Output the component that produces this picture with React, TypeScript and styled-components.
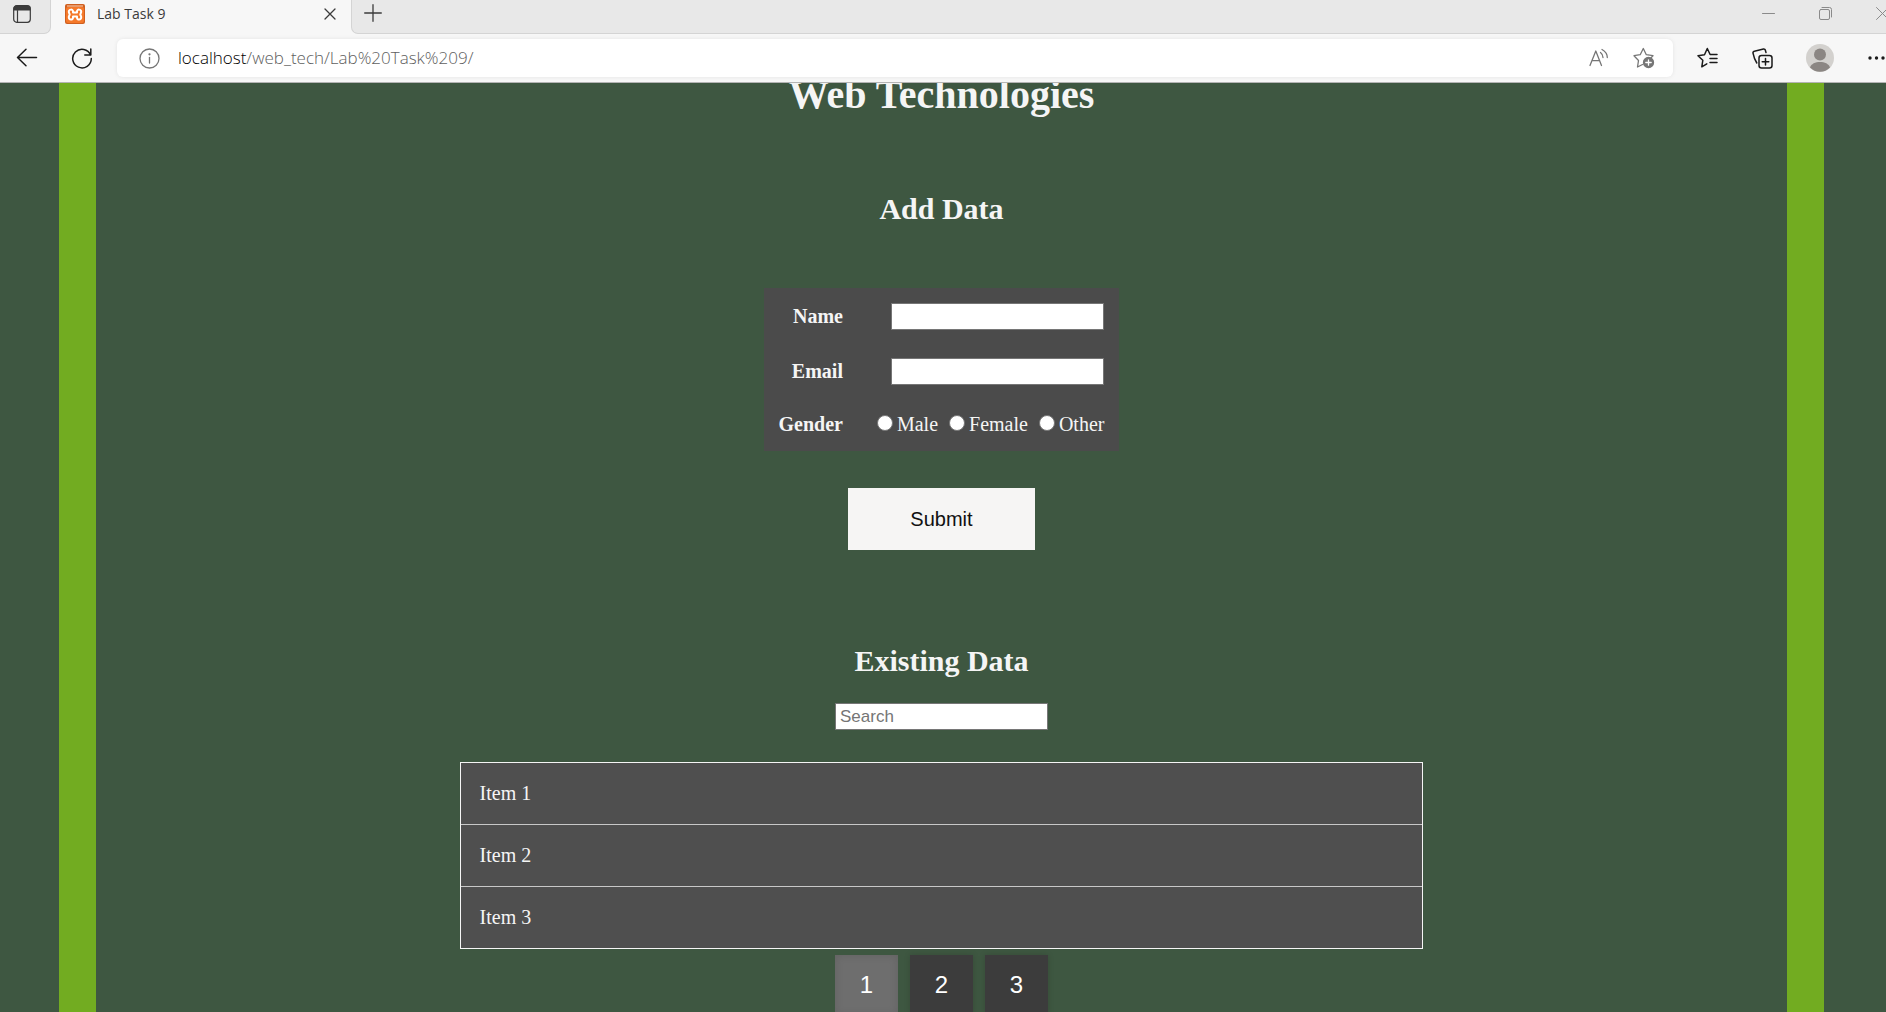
import React, { useState } from "react";
import styled, { createGlobalStyle } from "styled-components";

const GlobalStyle = createGlobalStyle`
  * { box-sizing: border-box; }
  body { margin: 0; background: #3e5741; }
  h1, h2, ul { margin: 0; padding: 0; }
  svg { display: block; flex: none; }
`;

const ui = `"Open Sans", "Noto Sans", sans-serif`;
const serif = `"Liberation Serif", "Times New Roman", serif`;
const sans = `"Liberation Sans", Arial, sans-serif`;

const Window = styled.div`
  display: flex;
  flex-direction: column;
  height: 100vh;
  overflow: hidden;
`;

/* ---------- browser chrome ---------- */

const TabStrip = styled.header`
  display: flex;
  flex: none;
  height: 34px;
  background: #f7f7f7;
  overflow: hidden;
`;

const PlainButton = styled.button`
  display: flex;
  align-items: center;
  justify-content: center;
  flex: none;
  padding: 0;
  border: 0;
  background: none;
  color: inherit;
`;

const StripStart = styled.div`
  display: flex;
  align-items: center;
  width: 51px;
  padding: 0 0 6px 13px;
  background: #e8e8e8;
  border: solid #d4d4d4;
  border-width: 0 1px 1px 0;
  border-bottom-right-radius: 7px;
  color: #3b3b3b;
`;

const Tab = styled.div`
  display: flex;
  align-items: center;
  width: 300px;
  padding: 0 15px 6px 14px;
  gap: 12px;
  color: #3b3b3b;
`;

const TabTitle = styled.span`
  flex: 1;
  font: 14px/20px ${ui};
`;

const StripEnd = styled.div`
  display: flex;
  align-items: center;
  justify-content: space-between;
  flex: 1;
  padding: 0 0 7px 12px;
  background: #e8e8e8;
  border: solid #d4d4d4;
  border-width: 0 0 1px 1px;
  border-bottom-left-radius: 7px;
  color: #3b3b3b;
`;

const WindowControls = styled.div`
  display: flex;
  gap: 44px;
  margin-right: -3px;
  color: #8a8a8a;
`;

const Toolbar = styled.nav`
  display: flex;
  align-items: center;
  flex: none;
  height: 49px;
  padding: 0 0 0 16px;
  background: #f7f7f7;
  border-bottom: 1px solid #b4b4b4;
  color: #1b1b1b;
`;

const NavButtons = styled.div`
  display: flex;
  gap: 33px;
  margin-right: 24px;
`;

const AddressBar = styled.div`
  display: flex;
  align-items: center;
  flex: 1;
  height: 38px;
  padding: 0 18px 0 22px;
  border-radius: 6px;
  background: #fff;
  box-shadow: 0 0 4px rgba(0, 0, 0, 0.08);
  color: #767676;
`;

const Url = styled.div`
  flex: 1;
  margin-left: 18px;
  font: 300 17px/24px ${ui};
  color: #606060;
`;

const Host = styled.span`
  color: #000;
`;

const BarIcons = styled.div`
  display: flex;
  gap: 24px;
`;

const ToolIcons = styled.div`
  display: flex;
  align-items: center;
  gap: 33px;
  margin-left: 24px;
`;

/* ---------- page ---------- */

const Viewport = styled.div`
  flex: 1;
  min-height: 0;
  overflow: hidden;
  padding: 0 62px 0 59px;
  background: #3e5741;
`;

const Page = styled.main`
  display: flex;
  flex-direction: column;
  align-items: center;
  height: 100%;
  border: solid #72ac21;
  border-width: 0 37px;
  color: #f5f5f5;
  font: 20px/23px ${serif};
`;

const Title = styled.h1`
  flex: none;
  margin-top: -11px;
  font-size: 40px;
  line-height: 46px;
`;

const Heading = styled.h2<{ $gap: number }>`
  flex: none;
  margin-top: ${(p) => p.$gap}px;
  font-size: 30px;
  line-height: 34px;
`;

const Form = styled.form`
  display: flex;
  flex: none;
  flex-direction: column;
  align-items: center;
  gap: 37px;
  margin-top: 62px;
`;

const Fields = styled.div`
  display: grid;
  grid-template-columns: auto auto;
  gap: 28px 34px;
  align-items: center;
  justify-items: end;
  padding: 15px;
  background: #4b4b4b;
`;

const FieldLabel = styled.label`
  font-weight: bold;
`;

const TextBox = styled.input`
  flex: none;
  width: 213px;
  height: 27px;
  padding: 0 4px;
  border: 1px solid #767676;
  border-radius: 0;
  background: #fff;
  font: 17px/20px ${sans};
  &::placeholder { color: #757575; opacity: 1; }
`;

const Radios = styled.div`
  display: flex;
  gap: 11px;
`;

const RadioLabel = styled.label`
  display: flex;
  gap: 4px;
`;

const Radio = styled.input`
  appearance: none;
  width: 16px;
  height: 16px;
  margin: 2px 0 0;
  border: 1px solid #767676;
  border-radius: 50%;
  background: #fff;
  &:checked { box-shadow: inset 0 0 0 3px #fff; background: #0075ff; }
`;

const Submit = styled.button`
  width: 187px;
  height: 62px;
  border: 0;
  background: #f6f5f4;
  color: #111;
  font: 20px/24px ${sans};
`;

const Search = styled(TextBox)`
  margin-top: 25px;
`;

const List = styled.ul`
  flex: none;
  width: 57%;
  margin-top: 32px;
  border: 1px solid #f5f5f5;
  background: #4f4f4f;
  list-style: none;
`;

const Item = styled.li`
  padding: 19px;
  & + & { border-top: 1px solid #c8c8c8; }
`;

const Pager = styled.nav`
  display: flex;
  flex: none;
  gap: 12px;
  margin-top: 6px;
`;

const PageButton = styled.button<{ $active: boolean }>`
  width: 63px;
  height: 60px;
  border: 0;
  background: ${(p) => (p.$active ? "#6e6e6e" : "#3c3c3c")};
  box-shadow: ${(p) => (p.$active ? "inset 0 0 8px rgba(0,0,0,.12)" : "0 0 6px rgba(0,0,0,.15)")};
  color: #fff;
  font: 24px/28px ${sans};
`;

/* ---------- icons ---------- */

type IconProps = { w: number; h?: number; sw?: number; children: React.ReactNode };
const Icon = ({ w, h = w, sw = 1.5, children }: IconProps) => (
  <svg width={w} height={h} viewBox={`0 0 ${w} ${h}`} fill="none" stroke="currentColor"
    strokeWidth={sw} strokeLinecap="round" strokeLinejoin="round" aria-hidden="true">
    {children}
  </svg>
);

const TabActionsIcon = () => (
  <Icon w={18} sw={1.2}>
    <rect x="0.7" y="0.7" width="16.6" height="16.6" rx="3" />
    <path d="M1 5V3.5A2.5 2.5 0 0 1 3.500 1h11A2.500 2.500 0 0 1 17 3.500V5z" fill="currentColor" />
    <path d="M4.500 5.500v11.500" />
  </Icon>
);

const XamppIcon = () => (
  <svg width="20" height="20" viewBox="0 0 20 20" aria-hidden="true">
    <rect width="20" height="20" rx="2" fill="#cf5f1f" />
    <rect x="1" y="3" width="18" height="16" rx="2" fill="#f5792a" />
    <path d="M2 1h16v2H2z" fill="#e79a6c" />
    <path d="M8 7.200c0-2.200-4.200-2.200-4.200.6 0 1.300.9 1.800.9 2.700s-.9 1.400-.9 2.700c0 2.900 4.200 2.900 4.200.6M12 7.200c0-2.200 4.200-2.200 4.200.6 0 1.300-.9 1.800-.9 2.700s.9 1.400.9 2.700c0 2.900-4.200 2.900-4.200.6M8 7.200v1.300h4V7.200M8 13.800v-1.300h4v1.300"
      fill="none" stroke="#fff" strokeWidth="2" strokeLinecap="round" strokeLinejoin="round" />
  </svg>
);

const pages = [1, 2, 3];
const items = ["Item 1", "Item 2", "Item 3"];

export default function App() {
  const [page, setPage] = useState(1);
  return (
    <Window>
      <GlobalStyle />
      <TabStrip>
        <StripStart>
          <PlainButton aria-label="Tab actions"><TabActionsIcon /></PlainButton>
        </StripStart>
        <Tab>
          <XamppIcon />
          <TabTitle>Lab Task 9</TabTitle>
          <PlainButton aria-label="Close tab">
            <Icon w={12} sw={1.3}><path d="M1 1l10 10M11 1L1 11" /></Icon>
          </PlainButton>
        </Tab>
        <StripEnd>
          <PlainButton aria-label="New tab">
            <Icon w={18} sw={1.3}><path d="M9 .7v16.600M.7 9h16.600" /></Icon>
          </PlainButton>
          <WindowControls>
            <PlainButton aria-label="Minimize">
              <Icon w={13} sw={1}><path d="M.5 6.500h12" /></Icon>
            </PlainButton>
            <PlainButton aria-label="Restore">
              <Icon w={13} sw={1}>
                <rect x=".5" y="2.500" width="10" height="10" rx="1.500" />
                <path d="M3 .5h7.500a2 2 0 0 1 2 2V10" />
              </Icon>
            </PlainButton>
            <PlainButton aria-label="Close">
              <Icon w={13} sw={1}><path d="M.5.5l12 12M12.500.5l-12 12" /></Icon>
            </PlainButton>
          </WindowControls>
        </StripEnd>
      </TabStrip>

      <Toolbar>
        <NavButtons>
          <PlainButton aria-label="Back">
            <Icon w={22}><path d="M10 2.200L1.500 10.500 10 18.800M1.500 10.500h19" /></Icon>
          </PlainButton>
          <PlainButton aria-label="Refresh">
            <Icon w={22}><path d="M19.600 8A9.300 9.300 0 1 0 20.300 11.500M19.800 2v6h-6" /></Icon>
          </PlainButton>
        </NavButtons>
        <AddressBar>
          <Icon w={21} sw={1.3}>
            <circle cx="10.500" cy="10.500" r="9.500" />
            <path d="M10.500 9.500v5.500" />
            <circle cx="10.500" cy="6.300" r=".5" fill="currentColor" />
          </Icon>
          <Url><Host>localhost</Host>/web_tech/Lab%20Task%209/</Url>
          <BarIcons>
            <PlainButton aria-label="Read aloud">
              <Icon w={20} sw={1.3}>
                <path d="M1 17.500L6.800 3l5.700 14.500M3 12.700h7.700M11.500 4.500c1.700 1.300 2.500 2.800 2.500 5M13 1.500c3.500 2 5.300 4.500 5.300 8" />
              </Icon>
            </PlainButton>
            <PlainButton aria-label="Add to favorites">
              <Icon w={22} sw={1.3}>
                <path d="M9.500 17.500l-5 2.500 1-6.500L1 8.700l6.200-1L10.300 1.500l3 6.200 6.700 1-2 2" />
                <circle cx="15.500" cy="15.500" r="5" fill="currentColor" />
                <path d="M15.500 12.800v5.400M12.800 15.500h5.400" stroke="#fff" />
              </Icon>
            </PlainButton>
          </BarIcons>
        </AddressBar>
        <ToolIcons>
          <PlainButton aria-label="Favorites">
            <Icon w={22}>
              <path d="M9.800 16.800l-5 3 1-6.500L1 8.700l6.500-1L10.300 1.500l2.800 6H20M13 11.500h7M13 15.500h7" />
            </Icon>
          </PlainButton>
          <PlainButton aria-label="Collections">
            <Icon w={21}>
              <rect x="7" y="7.500" width="13" height="12.500" rx="2.500" />
              <path d="M13.500 10.500v6.500M10.200 13.700h6.600M14 4.500l-.6-2A1.600 1.600 0 0 0 11.500 1L2.300 3.300A1.600 1.600 0 0 0 1 5.200c.7 3.500 1.700 6.800 3.800 9.800" />
            </Icon>
          </PlainButton>
          <PlainButton aria-label="Profile">
            <svg width="28" height="28" viewBox="0 0 28 28" aria-hidden="true">
              <circle cx="14" cy="14" r="14" fill="#d3d1ce" />
              <circle cx="14" cy="10.500" r="6" fill="#8b8683" />
              <path d="M4 23.500c2-7.300 18-7.300 20 0A14 14 0 0 1 4 23.500z" fill="#8b8683" />
            </svg>
          </PlainButton>
          <PlainButton aria-label="Settings and more">
            <Icon w={19} h={4} sw={0}>
              <g fill="currentColor">
                <circle cx="3" cy="2" r="1.700" /><circle cx="9.500" cy="2" r="1.700" /><circle cx="16" cy="2" r="1.700" />
              </g>
            </Icon>
          </PlainButton>
        </ToolIcons>
      </Toolbar>

      <Viewport>
        <Page>
          <Title>Web Technologies</Title>
          <Heading $gap={74}>Add Data</Heading>
          <Form onSubmit={(e) => e.preventDefault()}>
            <Fields>
              <FieldLabel htmlFor="name">Name</FieldLabel>
              <TextBox id="name" type="text" />
              <FieldLabel htmlFor="email">Email</FieldLabel>
              <TextBox id="email" type="email" />
              <FieldLabel as="span" id="gender">Gender</FieldLabel>
              <Radios role="radiogroup" aria-labelledby="gender">
                {["Male", "Female", "Other"].map((g) => (
                  <RadioLabel key={g}>
                    <Radio type="radio" name="gender" value={g} />
                    {g}
                  </RadioLabel>
                ))}
              </Radios>
            </Fields>
            <Submit type="submit">Submit</Submit>
          </Form>
          <Heading $gap={94}>Existing Data</Heading>
          <Search type="search" placeholder="Search" aria-label="Search" />
          <List>
            {items.map((item) => <Item key={item}>{item}</Item>)}
          </List>
          <Pager aria-label="Pages">
            {pages.map((n) => (
              <PageButton key={n} $active={n === page} onClick={() => setPage(n)}>{n}</PageButton>
            ))}
          </Pager>
        </Page>
      </Viewport>
    </Window>
  );
}
